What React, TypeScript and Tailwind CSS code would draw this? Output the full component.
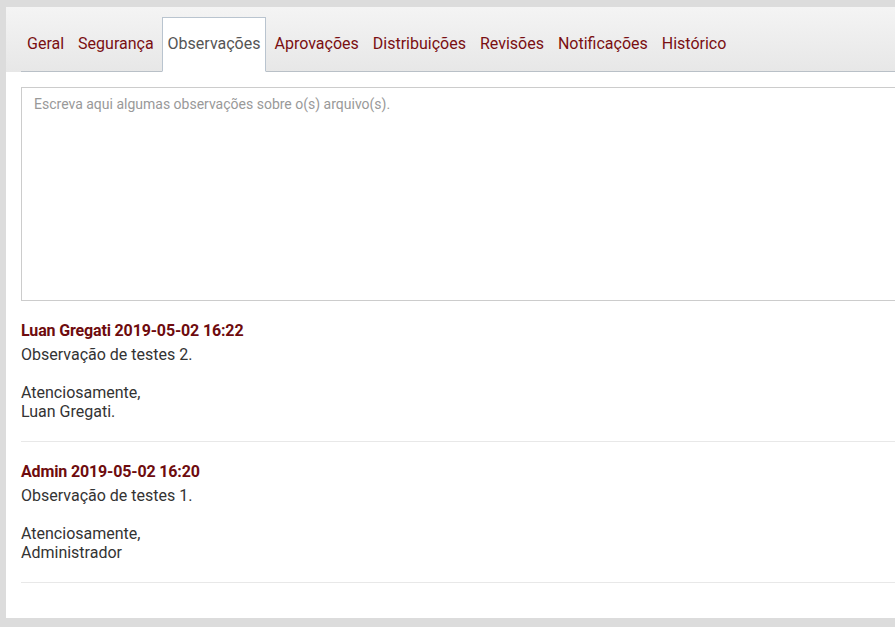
import { useState } from "react";

const tabs = [
  "Geral",
  "Segurança",
  "Observações",
  "Aprovações",
  "Distribuições",
  "Revisões",
  "Notificações",
  "Histórico",
];

const notes = [
  {
    author: "Luan Gregati",
    date: "2019-05-02 16:22",
    lines: ["Observação de testes 2.", "", "Atenciosamente,", "Luan Gregati."],
  },
  {
    author: "Admin",
    date: "2019-05-02 16:20",
    lines: ["Observação de testes 1.", "", "Atenciosamente,", "Administrador"],
  },
];

export default function App() {
  const [active, setActive] = useState("Observações");
  const [text, setText] = useState("");

  return (
    <div
      className="w-[895px] h-[627px] overflow-hidden bg-[#dcdcdc] pl-[6px] pt-[7px]"
      style={{ fontFamily: "Roboto, 'Liberation Sans', sans-serif" }}
    >
      <div className="w-[920px] h-[611px] bg-white">
        {/* abas */}
        <div className="bg-gradient-to-b from-[#f4f4f4] to-[#e7e7e7] pt-[10px] px-[15px]">
          <ul className="flex border-b border-[#b9c0c7]">
            {tabs.map((tab) => (
              <li key={tab} className="mr-[2px] -mb-px">
                <button
                  onClick={() => setActive(tab)}
                  className={
                    tab === active
                      ? "block px-[5px] pb-[1px] h-[55px] text-[16px] leading-[18px] border border-[#b9c4cf] border-b-white bg-white text-[#555]"
                      : "block px-[5px] pb-[1px] h-[55px] text-[16px] leading-[18px] border border-transparent text-[#7a0f12]"
                  }
                >
                  {tab}
                </button>
              </li>
            ))}
          </ul>
        </div>

        <div className="px-[15px] pt-[15px]">
          <textarea
            value={text}
            onChange={(e) => setText(e.target.value)}
            placeholder="Escreva aqui algumas observações sobre o(s) arquivo(s)."
            className="block w-full h-[214px] resize-none border border-[#cccccc] px-[12px] py-[6px] text-[14px] leading-[20px] text-[#333] placeholder:text-[#999] outline-none"
          />

          {notes.map((note) => (
            <div
              key={note.date}
              className="pt-[20px] pb-[20px] border-b border-[#e8e8e8] text-[16px] leading-[19px]"
            >
              <p className="font-bold text-[#6e0b0e] mb-[5px] tracking-[-0.15px]">
                {note.author} {note.date}
              </p>
              {note.lines.map((line, i) => (
                <p key={i} className="text-[#333] min-h-[19px]">
                  {line}
                </p>
              ))}
            </div>
          ))}
        </div>
      </div>
    </div>
  );
}
